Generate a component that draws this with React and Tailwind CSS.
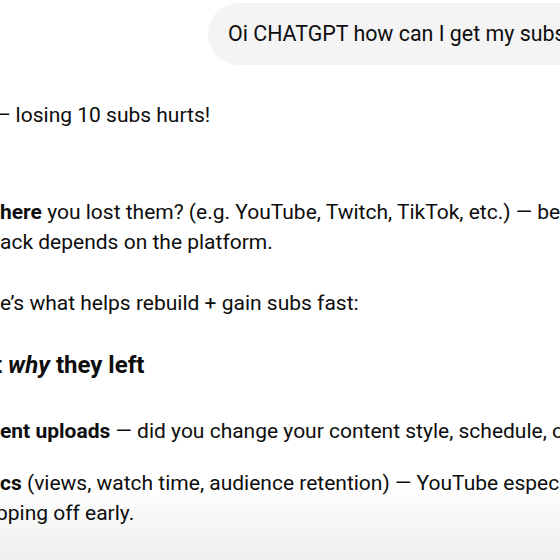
export default function App() {
  return (
    <div className="w-[560px] h-[560px] overflow-hidden bg-[linear-gradient(to_bottom,#ffffff_0%,#ffffff_86%,#eeeeee_100%)] font-[Roboto,sans-serif] text-[21px] leading-[30px] text-[#0d0d0d]">
      {/* user message */}
      <div className="flex pl-[208px] pt-[3px]">
        <div className="shrink-0 whitespace-nowrap rounded-[31px] bg-[#f4f4f4] pl-[20px] pr-[24px] py-[16px] text-[21.4px]">
          Oi CHATGPT how can I get my subs back up?
        </div>
      </div>

      {/* assistant reply */}
      <div className="flex flex-col whitespace-nowrap">
        <p className="mt-[35px] ml-[-6px]">— losing 10 subs hurts!</p>

        <div className="mt-[67px]">
          <p>
            <span className="font-bold">here</span> you lost them? (e.g. YouTube, Twitch, TikTok, etc.) — because
          </p>
          <p>ack depends on the platform.</p>
        </div>

        <p className="mt-[31px]">e’s what helps rebuild + gain subs fast:</p>

        <h3 className="mt-[31px] ml-[-6px] text-[24px] leading-[33px] font-bold">
          t <em>why</em> they left
        </h3>

        <p className="mt-[34px]">
          <span className="font-bold">ent uploads</span> — did you change your content style, schedule, or
        </p>

        <div className="mt-[22px]">
          <p>
            <span className="font-bold">cs</span> (views, watch time, audience retention) — YouTube especially
          </p>
          <p className="ml-[-16px]">opping off early.</p>
        </div>
      </div>
    </div>
  );
}
